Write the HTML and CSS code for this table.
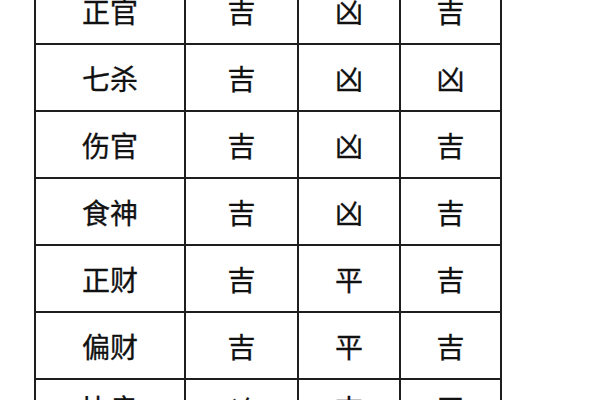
FILE: index.html
```html
<!DOCTYPE html>
<html lang="zh-CN">
<head>
<meta charset="utf-8">
<title>十神吉凶表</title>
<link rel="stylesheet" href="styles.css">
</head>
<body>
<div class="page">
  <div class="table">
    <div class="cell">正官</div><div class="cell">吉</div><div class="cell">凶</div><div class="cell">吉</div>
    <div class="cell">七杀</div><div class="cell">吉</div><div class="cell">凶</div><div class="cell">凶</div>
    <div class="cell">伤官</div><div class="cell">吉</div><div class="cell">凶</div><div class="cell">吉</div>
    <div class="cell">食神</div><div class="cell">吉</div><div class="cell">凶</div><div class="cell">吉</div>
    <div class="cell">正财</div><div class="cell">吉</div><div class="cell">平</div><div class="cell">吉</div>
    <div class="cell">偏财</div><div class="cell">吉</div><div class="cell">平</div><div class="cell">吉</div>
    <div class="cell last">比肩</div><div class="cell last">凶</div><div class="cell last">吉</div><div class="cell last">平</div>
  </div>
</div>
</body>
</html>
```
FILE: styles.css
```css
html, body {
  margin: 0;
  padding: 0;
  height: 400px;
  overflow: hidden;
  background: #ffffff;
}
.page {
  width: 600px;
  height: 400px;
  overflow: hidden;
  padding-left: 34px;
  box-sizing: border-box;
}
.table {
  margin-top: -24px;
  width: 468px;
  box-sizing: border-box;
  display: grid;
  grid-template-columns: 148px 111px 100px 99px;
  grid-auto-rows: 65px;
  gap: 2px;
  padding: 2px;
  background: #1e1e1e;
}
.cell {
  background: #ffffff;
  display: flex;
  align-items: center;
  justify-content: center;
  font-family: "Noto Sans CJK SC", "Noto Sans", sans-serif;
  font-size: 28px;
  color: #111111;
  line-height: 1;
  -webkit-text-stroke: 0.3px #111111;
}
.cell.last {
  align-items: flex-start;
  padding-top: 14px;
}
```
